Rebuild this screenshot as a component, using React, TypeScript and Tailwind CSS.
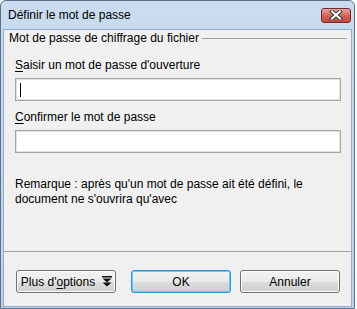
import React from "react";

const font = { fontFamily: '"Liberation Sans", Arial, sans-serif' };

function CloseButton() {
  return (
    <div className="w-[30px] h-[15px] rounded-[3px] border border-[#6b2a2a] bg-gradient-to-b from-[#e8a89e] via-[#d0665c] to-[#c0483e] flex items-center justify-center">
      <svg width="14" height="10" viewBox="0 0 14 10">
        <path d="M3 1.5 L11 8.5 M11 1.5 L3 8.5" stroke="#3a3a3a" strokeWidth="4" strokeLinecap="square" />
        <path d="M3 1.5 L11 8.5 M11 1.5 L3 8.5" stroke="#ffffff" strokeWidth="2" strokeLinecap="square" />
      </svg>
    </div>
  );
}

function DoubleArrow() {
  return (
    <svg width="10" height="11" viewBox="0 0 10 11">
      <rect x="0" y="0" width="10" height="1.5" fill="#111" />
      <path d="M0.5 2.5 L9.5 2.5 L5 6.5 Z" fill="#111" />
      <path d="M0.5 6.5 L9.5 6.5 L5 10.5 Z" fill="#111" />
    </svg>
  );
}

function Button({ children, primary }: { children: React.ReactNode; primary?: boolean }) {
  return (
    <div
      className={
        "w-[100px] h-[23px] rounded-[3px] border flex items-center justify-center text-[12px] text-black bg-[linear-gradient(to_bottom,#f2f2f2_0%,#ebebeb_50%,#dddddd_51%,#cfcfcf_100%)] " +
        (primary
          ? "border-[#3c8fd0] shadow-[inset_0_0_0_1px_#5fd0f8]"
          : "border-[#707070] shadow-[inset_0_0_0_1px_#fcfcfc]")
      }
    >
      {children}
    </div>
  );
}

export default function App() {
  return (
    <div className="w-[357px] h-[309px] bg-white" style={font}>
      <div className="w-[355px] h-[309px] rounded-t-[6px] border border-[#5f7188] bg-gradient-to-b from-[#c9dcf0] to-[#bcd2ea] flex flex-col">
        {/* title bar */}
        <div className="h-[28px] flex items-center justify-between pl-[7px] pr-[3px]">
          <span className="text-[12px] leading-[16px] text-black">Définir le mot de passe</span>
          <CloseButton />
        </div>

        {/* client area */}
        <div className="flex-1 mx-[2px] mb-[1px] border border-[#93aecd] bg-[#f0f0f0] flex flex-col text-[12px] leading-[16px] text-black">
          <div className="flex items-center pl-[5px] pr-[4px]">
            <span>Mot de passe de chiffrage du fichier</span>
            <div className="flex-1 h-px bg-[#a0a0a0] ml-[3px] mt-[1px]" />
          </div>

          <div className="flex flex-col pl-[11px] pr-[10px]">
            <span className="mt-[11px]">
              <span className="underline underline-offset-2">S</span>aisir un mot de passe d'ouverture
            </span>
            <div className="mt-[5px] h-[23px] bg-white border border-[#a5a5a5] shadow-[inset_0_0_0_1px_#e2e2e2] flex items-center pl-[4px]">
              <div className="w-px h-[14px] bg-black" />
            </div>

            <span className="mt-[8px]">
              <span className="underline underline-offset-2">C</span>onfirmer le mot de passe
            </span>
            <div className="mt-[5px] h-[23px] bg-white border border-[#a5a5a5] shadow-[inset_0_0_0_1px_#e2e2e2]" />

            <p className="mt-[24px] leading-[15px]">
              Remarque : après qu'un mot de passe ait été défini, le
              <br />
              document ne s'ouvrira qu'avec
            </p>
          </div>

          <div className="flex-1" />
          <div className="h-px bg-[#a0a0a0]" />

          <div className="flex items-center pl-[12px] pt-[18px] pb-[13px]">
            <Button>
              <span className="flex items-center gap-[7px] pl-[1px]">
                <span>
                  Plus d'<span className="underline underline-offset-2">o</span>ptions
                </span>
                <DoubleArrow />
              </span>
            </Button>
            <div className="ml-[15px]">
              <Button primary>OK</Button>
            </div>
            <div className="ml-[9px]">
              <Button>Annuler</Button>
            </div>
          </div>
        </div>
      </div>
    </div>
  );
}
